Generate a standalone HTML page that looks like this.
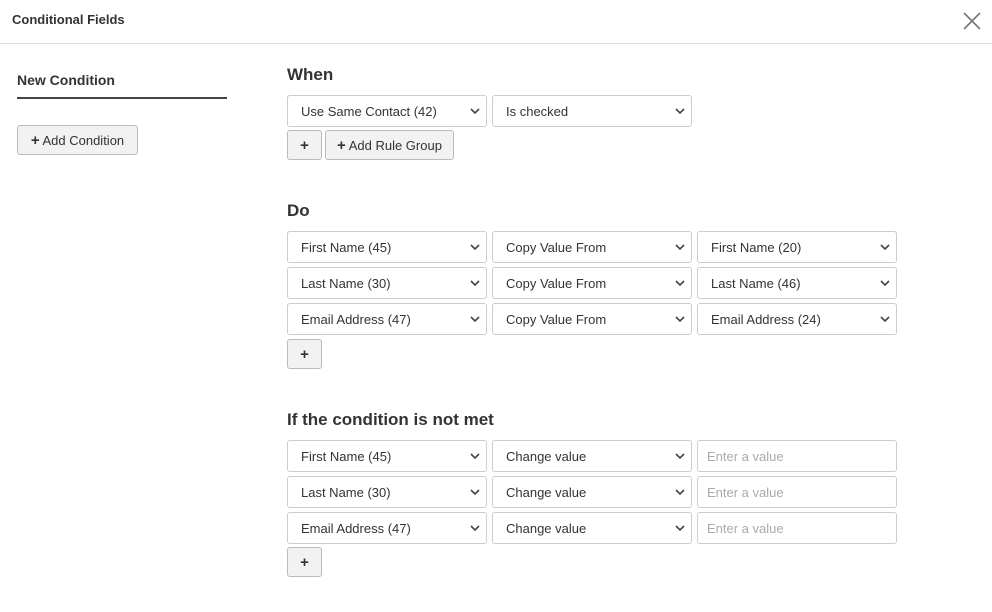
<!DOCTYPE html>
<html><head><style>
*{box-sizing:border-box;margin:0;padding:0}
body{width:992px;height:612px;background:#fff;font-family:"Liberation Sans",Arial,sans-serif;color:#333;position:relative;overflow:hidden}
.a{position:absolute}
.hdr{left:0;top:0;width:992px;height:44px;border-bottom:1px solid #ddd}
.title{left:12px;top:12px;font-size:13px;font-weight:bold;color:#333}
.h{font-size:17px;font-weight:bold;color:#333}
.sel{position:absolute;width:200px;height:32px;border:1px solid #ccc;border-radius:3px;font-size:13px;color:#333;padding:8px 13px;background:#fff}
.sel svg{position:absolute;right:6px;top:11px}
.inp{color:#aaa;padding-left:9px}
.btn{position:absolute;height:30px;border:1px solid #bbb;border-radius:3px;background:#f2f2f2;font-size:13px;color:#333;padding:7px 0;text-align:center}
.plus{font-weight:bold;font-size:15px;line-height:13px}
</style></head><body>
<div class="a hdr"></div>
<div class="a title">Conditional Fields</div>
<svg class="a" style="left:963px;top:12px" width="18" height="18" viewBox="0 0 18 18"><path d="M1 1L17 17M17 1L1 17" stroke="#777" stroke-width="1.6"/></svg>
<div class="a" style="left:17px;top:72px;font-size:14px;font-weight:bold;color:#333">New Condition</div>
<div class="a" style="left:17px;top:97px;width:210px;height:2px;background:#444"></div>
<div class="btn" style="left:17px;top:125px;width:121px"><span class="plus">+</span> Add Condition</div>

<div class="a h" style="left:287px;top:65px">When</div>
<div class="sel" style="left:287px;top:95px">Use Same Contact (42)<svg width="10" height="8"><path d="M1 2l4 4 4-4" stroke="#444" stroke-width="1.6" fill="none"/></svg></div>
<div class="sel" style="left:492px;top:95px">Is checked<svg width="10" height="8"><path d="M1 2l4 4 4-4" stroke="#444" stroke-width="1.6" fill="none"/></svg></div>
<div class="btn plus" style="left:287px;top:130px;width:35px;padding-top:8px">+</div>
<div class="btn" style="left:325px;top:130px;width:129px"><span class="plus">+</span> Add Rule Group</div>

<div class="a h" style="left:287px;top:201px">Do</div>
<div class="sel" style="left:287px;top:231px">First Name (45)<svg width="10" height="8"><path d="M1 2l4 4 4-4" stroke="#444" stroke-width="1.6" fill="none"/></svg></div>
<div class="sel" style="left:492px;top:231px">Copy Value From<svg width="10" height="8"><path d="M1 2l4 4 4-4" stroke="#444" stroke-width="1.6" fill="none"/></svg></div>
<div class="sel" style="left:697px;top:231px">First Name (20)<svg width="10" height="8"><path d="M1 2l4 4 4-4" stroke="#444" stroke-width="1.6" fill="none"/></svg></div>
<div class="sel" style="left:287px;top:267px">Last Name (30)<svg width="10" height="8"><path d="M1 2l4 4 4-4" stroke="#444" stroke-width="1.6" fill="none"/></svg></div>
<div class="sel" style="left:492px;top:267px">Copy Value From<svg width="10" height="8"><path d="M1 2l4 4 4-4" stroke="#444" stroke-width="1.6" fill="none"/></svg></div>
<div class="sel" style="left:697px;top:267px">Last Name (46)<svg width="10" height="8"><path d="M1 2l4 4 4-4" stroke="#444" stroke-width="1.6" fill="none"/></svg></div>
<div class="sel" style="left:287px;top:303px">Email Address (47)<svg width="10" height="8"><path d="M1 2l4 4 4-4" stroke="#444" stroke-width="1.6" fill="none"/></svg></div>
<div class="sel" style="left:492px;top:303px">Copy Value From<svg width="10" height="8"><path d="M1 2l4 4 4-4" stroke="#444" stroke-width="1.6" fill="none"/></svg></div>
<div class="sel" style="left:697px;top:303px">Email Address (24)<svg width="10" height="8"><path d="M1 2l4 4 4-4" stroke="#444" stroke-width="1.6" fill="none"/></svg></div>
<div class="btn plus" style="left:287px;top:339px;width:35px;padding-top:8px">+</div>

<div class="a h" style="left:287px;top:410px">If the condition is not met</div>
<div class="sel" style="left:287px;top:440px">First Name (45)<svg width="10" height="8"><path d="M1 2l4 4 4-4" stroke="#444" stroke-width="1.6" fill="none"/></svg></div>
<div class="sel" style="left:492px;top:440px">Change value<svg width="10" height="8"><path d="M1 2l4 4 4-4" stroke="#444" stroke-width="1.6" fill="none"/></svg></div>
<div class="sel inp" style="left:697px;top:440px">Enter a value</div>
<div class="sel" style="left:287px;top:476px">Last Name (30)<svg width="10" height="8"><path d="M1 2l4 4 4-4" stroke="#444" stroke-width="1.6" fill="none"/></svg></div>
<div class="sel" style="left:492px;top:476px">Change value<svg width="10" height="8"><path d="M1 2l4 4 4-4" stroke="#444" stroke-width="1.6" fill="none"/></svg></div>
<div class="sel inp" style="left:697px;top:476px">Enter a value</div>
<div class="sel" style="left:287px;top:512px">Email Address (47)<svg width="10" height="8"><path d="M1 2l4 4 4-4" stroke="#444" stroke-width="1.6" fill="none"/></svg></div>
<div class="sel" style="left:492px;top:512px">Change value<svg width="10" height="8"><path d="M1 2l4 4 4-4" stroke="#444" stroke-width="1.6" fill="none"/></svg></div>
<div class="sel inp" style="left:697px;top:512px">Enter a value</div>
<div class="btn plus" style="left:287px;top:547px;width:35px;padding-top:8px">+</div>
</body></html>
